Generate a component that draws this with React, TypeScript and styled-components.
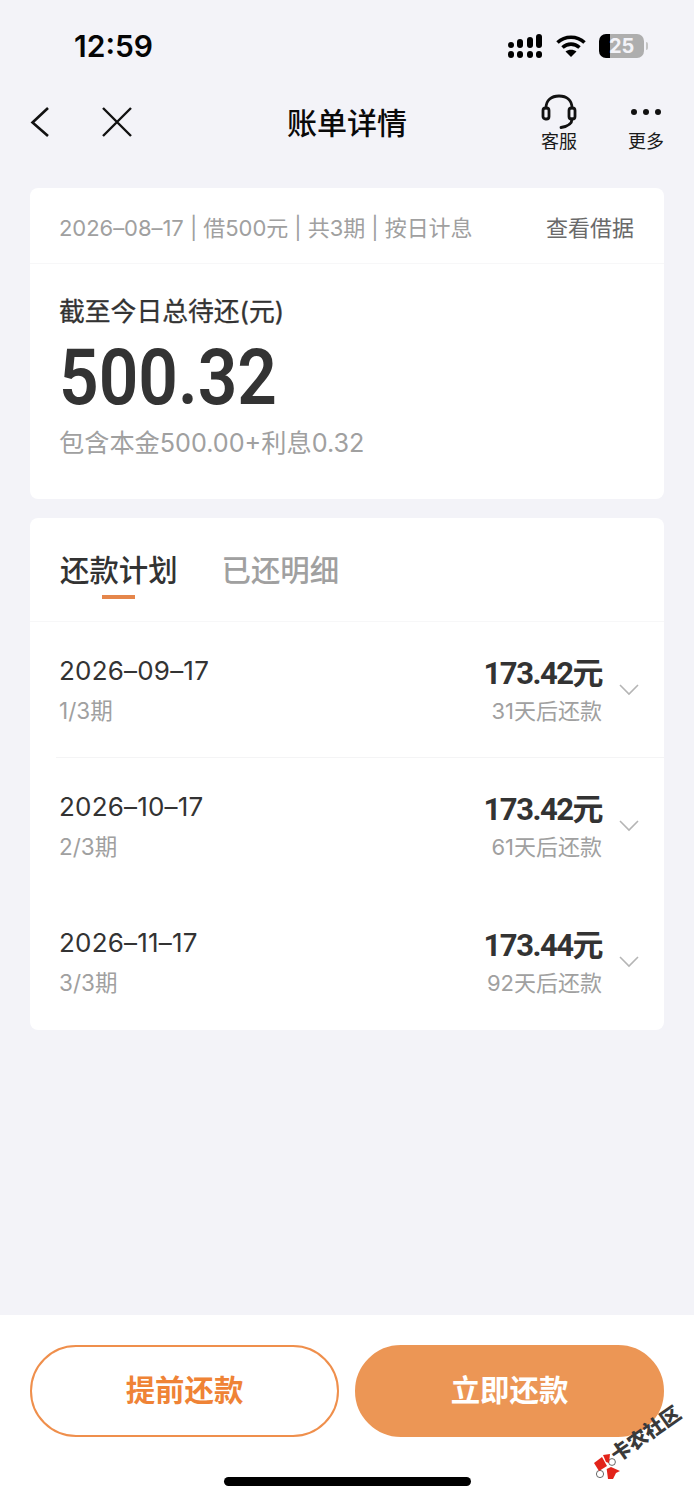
import React from "react";
import styled, { createGlobalStyle } from "styled-components";

const cjk = `"Inter", "Noto Sans CJK SC", sans-serif`;
const num = `"Roboto", "Noto Sans CJK SC", sans-serif`;

const GlobalStyle = createGlobalStyle`
    html, body {
        margin: 0;
        padding: 0;
        background: #f3f3f8;
    }
    * {
        box-sizing: border-box;
    }
`;

const Page = styled.div`
    width: 694px;
    height: 1500px;
    display: flex;
    flex-direction: column;
    background: #f3f3f8;
    font-family: ${cjk};
    overflow: hidden;
`;

const StatusBar = styled.div`
    height: 78px;
    padding: 27px 50px 0 74px;
    display: flex;
    justify-content: space-between;
    align-items: flex-start;
`;

const Clock = styled.div`
    font-family: "Inter", sans-serif;
    font-size: 30px;
    line-height: 38px;
    font-weight: 600;
    color: #050505;
`;

const StatusIcons = styled.div`
    display: flex;
    align-items: center;
    gap: 13px;
    height: 38px;
`;

const Battery = styled.div`
    position: relative;
    width: 45px;
    height: 24px;
    border-radius: 7px;
    background: linear-gradient(to right, #000 0, #000 11px, #aeaeae 11px);
    color: #f3f3f8;
    font-family: "Inter", sans-serif;
    font-size: 20px;
    line-height: 24px;
    font-weight: 700;
    padding-left: 10px;

    &::after {
        content: "";
        position: absolute;
        right: -4px;
        top: 8px;
        width: 2px;
        height: 8px;
        border-radius: 0 2px 2px 0;
        background: #c4c4c4;
    }
`;

const NavBar = styled.div`
    height: 110px;
    padding: 0 30px;
    display: flex;
    align-items: flex-start;
    justify-content: space-between;
    position: relative;
`;

const NavLeft = styled.div`
    display: flex;
    gap: 51px;
    padding-top: 28px;
`;

const NavTitle = styled.h1`
    position: absolute;
    left: 0;
    right: 0;
    top: 24px;
    margin: 0;
    text-align: center;
    font-size: 30px;
    line-height: 42px;
    font-weight: 500;
    color: #0a0a0a;
    pointer-events: none;
`;

const NavRight = styled.div`
    display: flex;
    gap: 51px;
    padding-top: 16px;
`;

const NavAction = styled.div`
    width: 36px;
    display: flex;
    flex-direction: column;
    align-items: center;
    font-size: 18px;
    line-height: 24px;
    color: #1a1a1a;
    white-space: nowrap;
`;

const Card = styled.section<{ $height: number }>`
    margin: 0 30px;
    height: ${(p) => p.$height}px;
    background: #fff;
    border-radius: 8px;
    overflow: hidden;
    & + & {
        margin-top: 19px;
    }
`;

const InfoRow = styled.div`
    height: 76px;
    padding: 0 30px 0 29px;
    display: flex;
    align-items: center;
    justify-content: space-between;
    border-bottom: 1px solid #f7f7f8;
`;

const InfoText = styled.div`
    font-size: 22px;
    color: #a0a0a0;
    letter-spacing: -0.05px;
    white-space: nowrap;
`;

const LinkText = styled.div`
    font-size: 22px;
    color: #6a6a6a;
`;

const AmountBlock = styled.div`
    padding: 30px 29px 0;
`;

const AmountLabel = styled.div`
    font-size: 25.8px;
    line-height: 36px;
    color: #333;
    -webkit-text-stroke: 0.3px #333;
`;

const AmountValue = styled.div`
    font-family: ${num};
    font-size: 78px;
    line-height: 92px;
    font-weight: 600;
    color: #333;
    margin-top: 2px;
    transform: scaleX(0.89);
    transform-origin: left center;
`;

const AmountNote = styled.div`
    font-size: 25.2px;
    line-height: 36px;
    color: #a0a0a0;
    margin-top: 1px;
`;

const Tabs = styled.div`
    height: 104px;
    padding: 0 30px;
    display: flex;
    gap: 44px;
    border-bottom: 1px solid #f7f7f8;
`;

const Tab = styled.div<{ $active?: boolean }>`
    position: relative;
    padding-top: 32px;
    font-size: 29.4px;
    line-height: 42px;
    font-weight: 500;
    color: ${(p) => (p.$active ? "#333" : "#a0a0a0")};

    &::after {
        content: "";
        display: ${(p) => (p.$active ? "block" : "none")};
        position: absolute;
        left: 42px;
        top: 77px;
        width: 33px;
        height: 4px;
        background: #e5864b;
    }
`;

const PlanRow = styled.div<{ $divider?: boolean }>`
    height: 136px;
    margin-left: 26px;
    padding: 30px 25px 0 3px;
    display: flex;
    justify-content: space-between;
    align-items: flex-start;
    border-bottom: 1px solid ${(p) => (p.$divider ? "#f4f4f5" : "transparent")};
`;

const PlanLeft = styled.div`
    display: flex;
    flex-direction: column;
`;

const PlanDate = styled.div`
    font-size: 26px;
    line-height: 38px;
    color: #333;
    letter-spacing: 0.2px;
`;

const PlanPeriod = styled.div`
    font-size: 22.5px;
    line-height: 32px;
    color: #a0a0a0;
    margin-top: 5px;
`;

const PlanRight = styled.div`
    display: flex;
    align-items: flex-start;
    gap: 17px;
`;

const PlanAmounts = styled.div`
    display: flex;
    flex-direction: column;
    align-items: flex-end;
`;

const PlanMoney = styled.div`
    font-family: ${num};
    font-size: 31px;
    line-height: 44px;
    font-weight: 700;
    color: #333;
    letter-spacing: -1.5px;
`;

const PlanDue = styled.div`
    font-size: 22px;
    line-height: 30px;
    color: #a0a0a0;
`;

const Chevron = styled.svg`
    margin-top: 32px;
`;

const Footer = styled.footer`
    position: relative;
    margin-top: auto;
    height: 185px;
    background: #fff;
    padding: 30px 30px 0;
    display: flex;
    gap: 16px;
    align-items: flex-start;
`;

const PayButton = styled.button<{ $primary?: boolean }>`
    flex: 1;
    height: 92px;
    padding: 0 0 6px;
    border-radius: 46px;
    font-family: ${cjk};
    font-size: 29.4px;
    font-weight: 700;
    border: 2px solid ${(p) => (p.$primary ? "#ec9655" : "#ef8f4c")};
    background: ${(p) => (p.$primary ? "#ec9655" : "#fff")};
    color: ${(p) => (p.$primary ? "#fff" : "#ef8336")};
`;

const HomeBar = styled.div`
    position: absolute;
    left: 224px;
    top: 162px;
    width: 247px;
    height: 9px;
    border-radius: 5px;
    background: #000;
`;

const WatermarkLogo = styled.svg`
    position: absolute;
    left: 594px;
    top: 138px;
`;

const WatermarkText = styled.div`
    position: absolute;
    left: 613px;
    top: 129px;
    transform: rotate(-35deg);
    transform-origin: left center;
    font-size: 20px;
    line-height: 26px;
    font-weight: 900;
    color: #3a3a3a;
    white-space: nowrap;
`;

const plans = [
    { date: "2026–09–17", period: "1/3期", money: "173.42元", due: "31天后还款" },
    { date: "2026–10–17", period: "2/3期", money: "173.42元", due: "61天后还款" },
    { date: "2026–11–17", period: "3/3期", money: "173.44元", due: "92天后还款" },
];

const App: React.FC = () => {
    return (
        <Page>
            <GlobalStyle />
            <StatusBar>
                <Clock>12:59</Clock>
                <StatusIcons>
                    <svg width="35" height="24" viewBox="0 0 35 24" fill="#000">
                        <rect x="0" y="8" width="6" height="6" rx="3" />
                        <rect x="0" y="17" width="6" height="7" rx="3" />
                        <rect x="9" y="5" width="6" height="9" rx="3" />
                        <rect x="9" y="17" width="6" height="7" rx="3" />
                        <rect x="19" y="3" width="6" height="11" rx="3" />
                        <rect x="19" y="17" width="6" height="7" rx="3" />
                        <rect x="28" y="0" width="6" height="14" rx="3" />
                        <rect x="28" y="17" width="6" height="7" rx="3" />
                    </svg>
                    <svg width="30" height="24" viewBox="0 0 30 24" fill="none" stroke="#000" strokeWidth="3.6">
                        <path d="M1.5 8.5C9 1.5 21 1.5 28.500 8.5" />
                        <path d="M6.5 13.5C11.5 9 18.5 9 23.5 13.5" />
                        <path d="M15 23l-5.5-5.5C12.5 15 17.5 15 20.5 17.5z" fill="#000" stroke="none" />
                    </svg>
                    <Battery>25</Battery>
                </StatusIcons>
            </StatusBar>

            <NavBar>
                <NavLeft>
                    <svg width="20" height="32" viewBox="0 0 20 32" fill="none" stroke="#111" strokeWidth="2.6">
                        <path d="M18 2L2.500 16.500 18 30" />
                    </svg>
                    <svg width="32" height="32" viewBox="0 0 32 32" fill="none" stroke="#111" strokeWidth="2.4">
                        <path d="M2 2l28 28M30 2L2 30" />
                    </svg>
                </NavLeft>
                <NavTitle>账单详情</NavTitle>
                <NavRight>
                    <NavAction>
                        <svg width="36" height="36" viewBox="0 0 36 36" fill="none" stroke="#111" strokeWidth="2.8" strokeLinecap="round">
                            <path d="M5 14C5 6 10.500 2 18 2s13 4 13 12" />
                            <rect x="2" y="14" width="6" height="11" rx="2.5" />
                            <rect x="28" y="14" width="6" height="11" rx="2.5" />
                            <path d="M31 25c0 5-5 7.500-11 8.500" />
                        </svg>
                        客服
                    </NavAction>
                    <NavAction>
                        <svg width="32" height="36" viewBox="0 0 32 36" fill="#111">
                            <circle cx="4" cy="18" r="3" />
                            <circle cx="16" cy="18" r="3" />
                            <circle cx="28" cy="18" r="3" />
                        </svg>
                        更多
                    </NavAction>
                </NavRight>
            </NavBar>

            <Card $height={311}>
                <InfoRow>
                    <InfoText>2026–08–17 | 借500元 | 共3期 | 按日计息</InfoText>
                    <LinkText>查看借据</LinkText>
                </InfoRow>
                <AmountBlock>
                    <AmountLabel>截至今日总待还(元)</AmountLabel>
                    <AmountValue>500.32</AmountValue>
                    <AmountNote>包含本金500.00+利息0.32</AmountNote>
                </AmountBlock>
            </Card>

            <Card $height={512}>
                <Tabs>
                    <Tab $active>还款计划</Tab>
                    <Tab>已还明细</Tab>
                </Tabs>
                {plans.map((plan, i) => (
                    <PlanRow key={plan.date} $divider={i === 0}>
                        <PlanLeft>
                            <PlanDate>{plan.date}</PlanDate>
                            <PlanPeriod>{plan.period}</PlanPeriod>
                        </PlanLeft>
                        <PlanRight>
                            <PlanAmounts>
                                <PlanMoney>{plan.money}</PlanMoney>
                                <PlanDue>{plan.due}</PlanDue>
                            </PlanAmounts>
                            <Chevron width="20" height="12" viewBox="0 0 20 12" fill="none" stroke="#b5b5b5" strokeWidth="1.6">
                                <path d="M1 1l9 9 9-9" />
                            </Chevron>
                        </PlanRight>
                    </PlanRow>
                ))}
            </Card>

            <Footer>
                <PayButton>提前还款</PayButton>
                <PayButton $primary>立即还款</PayButton>
                <HomeBar />
                <WatermarkLogo width="27" height="28" viewBox="0 0 27 28">
                    <circle cx="6" cy="21" r="3.6" fill="#fff" stroke="#444" strokeWidth="0.8" />
                    <circle cx="18" cy="9" r="3.4" fill="#fff" stroke="#444" strokeWidth="0.8" />
                    <path d="M0 10l8-6 5 9-8 5z" fill="#e2231a" />
                    <path d="M9 2l7-1-1 9-3-1z" fill="#e2231a" />
                    <path d="M12.700 16l4.300-2 9 4-4 2-3 6h-5z" fill="#e2231a" />
                </WatermarkLogo>
                <WatermarkText>卡农社区</WatermarkText>
            </Footer>
        </Page>
    );
};

export default App;
